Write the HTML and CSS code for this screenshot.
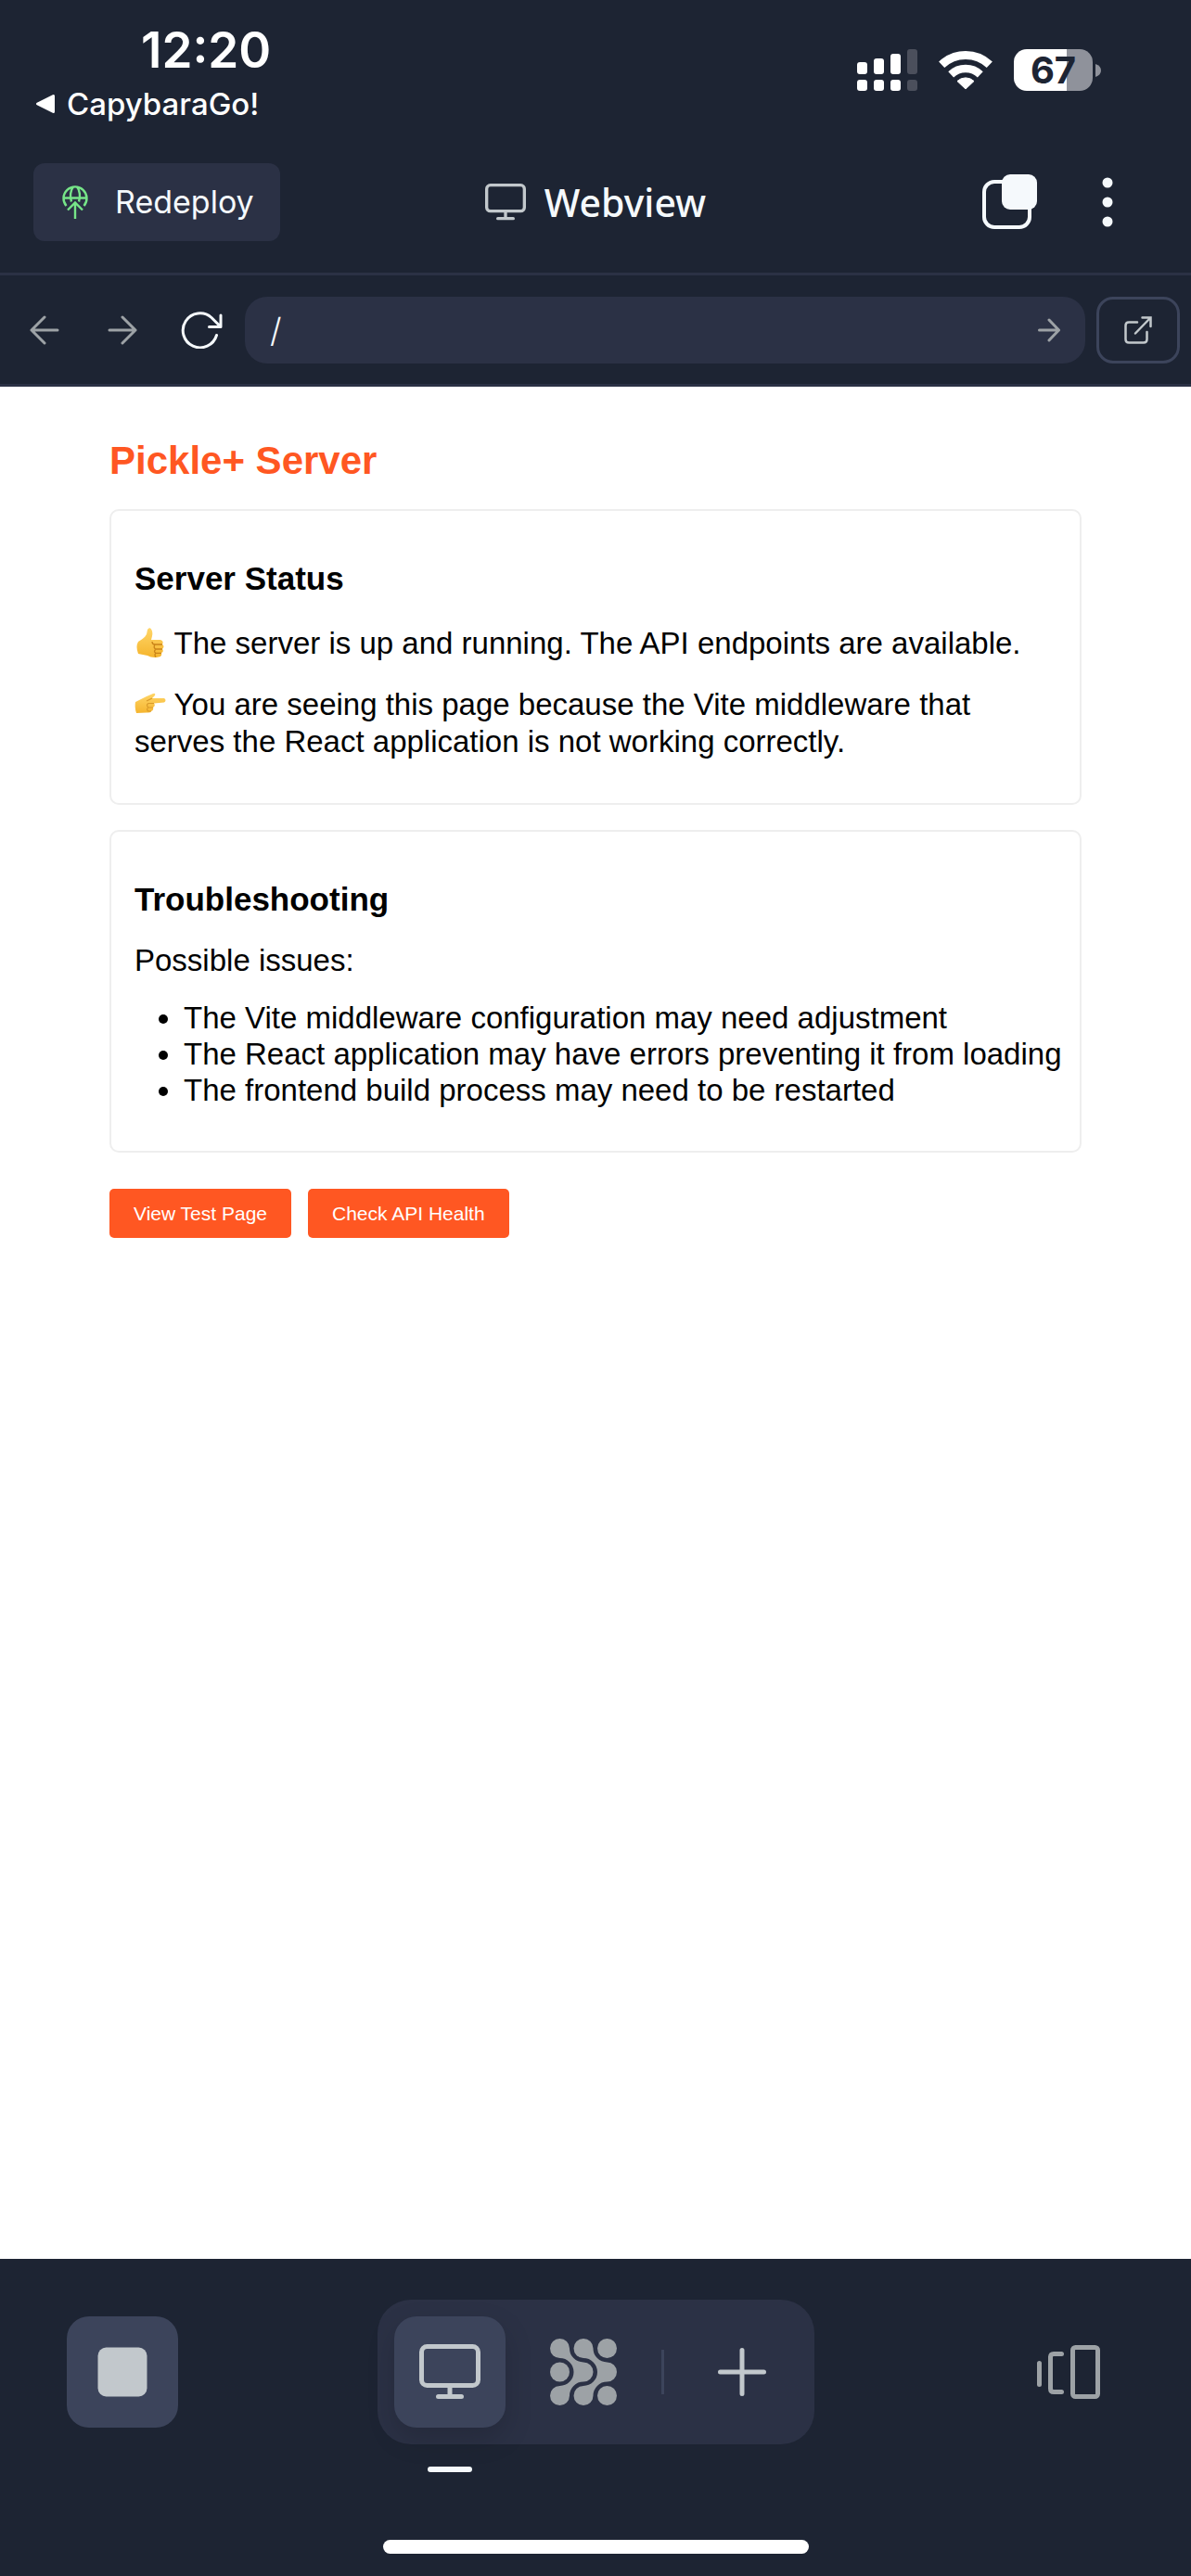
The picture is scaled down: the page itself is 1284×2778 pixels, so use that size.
FILE: index.html
```html
<!DOCTYPE html>
<html lang="en">
<head>
<meta charset="utf-8">
<meta name="viewport" content="width=device-width, initial-scale=1">
<title>Webview</title>
<link rel="stylesheet" href="styles.css">
</head>
<body>
<div class="statusbar">
  <div class="status-left">
    <time class="clock">12:20</time>
    <a class="back-app" href="#">
      <svg width="22" height="22" viewBox="0 0 22 22" aria-hidden="true"><path d="M2.500 11 19.500 2.500V19.500Z" fill="#fff" stroke="#fff" stroke-width="3" stroke-linejoin="round"/></svg>
      CapybaraGo!
    </a>
  </div>
  <div class="status-right">
    <svg width="65" height="45" viewBox="0 0 65 45" fill="#fff" aria-hidden="true">
      <rect x="0" y="14" width="11" height="13" rx="3"/><rect x="18" y="10" width="11" height="17" rx="3"/><rect x="36" y="5" width="11" height="22" rx="3"/>
      <rect x="0" y="33" width="11" height="12" rx="3"/><rect x="18" y="33" width="11" height="12" rx="3"/><rect x="36" y="33" width="11" height="12" rx="3"/>
      <g fill="#4b4f5c"><rect x="54" y="0" width="11" height="27" rx="3"/><rect x="54" y="33" width="11" height="12" rx="3"/></g>
    </svg>
    <svg class="wifi" width="58" height="45" viewBox="0 0 58 45" fill="none" stroke="#fff" aria-hidden="true">
      <path d="M3.200 16.800A37.500 37.500 0 0 1 54.800 16.800" stroke-width="9"/>
      <path d="M13.200 27.300A23 23 0 0 1 44.800 27.300" stroke-width="8.500"/>
      <path d="M29 43 20 34.500A13 13 0 0 1 38 34.500Z" fill="#fff" stroke-width="1" stroke-linejoin="round"/>
    </svg>
    <div class="battery">
      <span class="battery-level">67</span>
      <svg width="6" height="14" viewBox="0 0 6 14" aria-hidden="true"><path d="M0 0Q6 2 6 7T0 14Z" fill="#8f929b"/></svg>
    </div>
  </div>
</div>

<header class="header">
  <button class="redeploy" type="button">
    <svg width="30" height="38" viewBox="0 0 30 38" fill="none" stroke="#76e588" stroke-width="2.400" aria-hidden="true">
      <path d="M5.500 23A12.500 12.500 0 1 1 24.500 23M2.500 14.500H27.500M11 18.500C9 13 10 6 13 2.500M19 18.500C21 13 20 6 17 2.500"/>
      <path d="M15 37V20M7 27.500 15 19.500 23 27.500"/>
    </svg>
    Redeploy
  </button>
  <h1 class="title">
    <svg width="44" height="40" viewBox="0 0 66 60" fill="none" stroke="#c2c8cc" stroke-width="5" stroke-linecap="round" aria-hidden="true"><rect x="2.500" y="2.500" width="61" height="42" rx="6"/><path d="M33 45V56M20.500 56.500H45.500"/></svg>
    Webview
  </h1>
  <div class="header-actions">
    <button class="icon-btn" type="button" aria-label="Tabs">
      <svg width="60" height="60" viewBox="0 0 60 60" aria-hidden="true"><rect x="2" y="8" width="49" height="49" rx="11" fill="none" stroke="#f5f9fc" stroke-width="4"/><rect x="21" y="0" width="38" height="38" rx="9" fill="#f5f9fc"/></svg>
    </button>
    <button class="icon-btn" type="button" aria-label="More">
      <svg width="12" height="54" viewBox="0 0 12 54" fill="#f5f9fc" aria-hidden="true"><circle cx="6" cy="6" r="5.500"/><circle cx="6" cy="27" r="5.500"/><circle cx="6" cy="48" r="5.500"/></svg>
    </button>
  </div>
</header>

<nav class="toolbar">
  <button class="nav-btn" type="button" aria-label="Back">
    <svg width="32" height="32" viewBox="0 0 32 32" aria-hidden="true"><path d="M30 16H2M16 2 2 16 16 30"/></svg>
  </button>
  <button class="nav-btn" type="button" aria-label="Forward">
    <svg width="32" height="32" viewBox="0 0 32 32" aria-hidden="true"><path d="M2 16H30M16 2 30 16 16 30"/></svg>
  </button>
  <button class="nav-btn reload" type="button" aria-label="Reload">
    <svg width="48" height="40" viewBox="-4 0 48 40" aria-hidden="true"><path d="M37.500 25.500A18.500 18.500 0 1 1 32 6.500L41.500 16M42 4V16.500H29.500"/></svg>
  </button>
  <form class="address">
    <input class="address-input" type="text" value="/" aria-label="Address">
    <button class="icon-btn go" type="button" aria-label="Go">
      <svg width="24" height="26" viewBox="0 0 24 26" aria-hidden="true"><path d="M1.500 13H22.500M12 2 22.500 13 12 24"/></svg>
    </button>
  </form>
  <button class="open-btn" type="button" aria-label="Open in new window">
    <svg width="30" height="30" viewBox="0 0 30 30" fill="none" stroke="#c2c8cc" stroke-width="2.500" stroke-linecap="round" aria-hidden="true"><path d="M14 6.500H5Q1.500 6.500 1.500 10V25Q1.500 28.500 5 28.500H21Q24.500 28.500 24.500 25V17M19.500 1.500H28.500V11M28 2 12 18.500"/></svg>
  </button>
</nav>

<main class="page">
  <h2 class="page-title">Pickle+ Server</h2>
  <section class="card status">
    <h3>Server Status</h3>
    <p><svg class="emoji" width="34" height="34" viewBox="0 0 34 34" role="img" aria-label="Thumbs up"><defs><linearGradient id="skin" x1="0" y1="0" x2="0" y2="1"><stop offset="0" stop-color="#ffd567"/><stop offset="1" stop-color="#f5b52e"/></linearGradient></defs><path d="M4 15C7 13 11 11 13 7L14 2Q16-1 18 1.500Q20 4 19 9L18 13H28Q32 14 30 18Q33 20 30 23Q32 26 29 27Q30 31 26 31.500Q19 33 14 30L4 28Q1 20 4 15Z" fill="url(#skin)"/><path d="M30 18H22Q19 18 19 15M30 23H23Q20 22 22 18M29 27.300H23Q20 26 23 23M23 27.500Q21 29 23 31.500" fill="none" stroke="#c98318" stroke-width="1.300"/></svg> The server is up and running. The API endpoints are available.</p>
    <p><svg class="emoji" width="34" height="34" viewBox="0 0 34 34" role="img" aria-label="Pointing right"><path d="M1 14 13 8 20 5Q23 4 22 7L19 10H32Q35 12 32 14.500L21 15.500Q23 18 20 20Q21 23 18 24Q17 26 13 25.500L2 26Q0 20 1 14Z" fill="url(#skin)"/><path d="M21 15.500H15Q12 17 15 20H20M15 20Q12 22 15 24H18M19 10 13 13" fill="none" stroke="#d99a2a" stroke-width="1.200"/></svg> You are seeing this page because the Vite middleware that serves the React application is not working correctly.</p>
  </section>
  <section class="card">
    <h3>Troubleshooting</h3>
    <p>Possible issues:</p>
    <ul>
      <li>The Vite middleware configuration may need adjustment</li>
      <li>The React application may have errors preventing it from loading</li>
      <li>The frontend build process may need to be restarted</li>
    </ul>
  </section>
  <div class="actions">
    <button class="action" type="button">View Test Page</button>
    <button class="action" type="button">Check API Health</button>
  </div>
</main>

<footer class="dock">
  <div class="dock-row">
    <button class="dock-btn filled" type="button" aria-label="Stop">
      <svg width="54" height="54" viewBox="0 0 54 54" aria-hidden="true"><rect x="0.500" y="0.500" width="53" height="53" rx="9" fill="#c2c8cc"/></svg>
    </button>
    <div class="tabs">
      <button class="dock-btn filled active" type="button" aria-label="Webview">
        <svg width="66" height="60" viewBox="0 0 66 60" fill="none" stroke="#c2c8cc" stroke-width="5" stroke-linecap="round" aria-hidden="true"><rect x="2.500" y="2.500" width="61" height="42" rx="6"/><path d="M33 45V56M20.500 56.500H45.500"/></svg>
      </button>
      <button class="dock-btn" type="button" aria-label="Agent">
        <svg width="72" height="72" viewBox="0 0 72 72" fill="#9da2a6" aria-hidden="true">
          <path id="link" d="M21 10.500A15 15 0 0 0 36 25.500A10.500 10.500 0 0 1 36 46.500A15 15 0 0 0 21 61.500A10.500 10.500 0 1 1 10.500 51A15 15 0 0 0 10.500 21A10.500 10.500 0 1 1 21 10.500Z"/>
          <use href="#link" x="25.500"/>
          <circle cx="10.500" cy="36" r="10.500"/><circle cx="61.500" cy="10.500" r="10.500"/><circle cx="61.500" cy="61.500" r="10.500"/>
        </svg>
      </button>
      <span class="divider"></span>
      <button class="dock-btn" type="button" aria-label="Add tab">
        <svg width="54" height="54" viewBox="0 0 54 54" stroke="#c2c8cc" stroke-width="5" stroke-linecap="round" aria-hidden="true"><path d="M27 3.500V50.500M3.500 27H50.500"/></svg>
      </button>
    </div>
    <button class="dock-btn" type="button" aria-label="Switch tabs">
      <svg width="70" height="60" viewBox="0 0 70 60" fill="none" stroke="#9da2a6" stroke-width="5" stroke-linecap="round" stroke-linejoin="round" aria-hidden="true"><path d="M3.500 20.500V43.500M27.500 10.500H19Q15.500 10.500 15.500 14V48Q15.500 51.500 19 51.500H27.500"/><rect x="39.500" y="3.500" width="27" height="53" rx="3"/></svg>
    </button>
  </div>
  <div class="home-bar"></div>
</footer>
</body>
</html>
```
FILE: styles.css
```css
:root {
  --bg: #1d2433;
  --raised: #2b3145;
  --high: #3c445b;
  --text: #f5f9fc;
  --muted: #9da2a6;
  --accent: #ff5722;
}

* { box-sizing: border-box; }

body {
  margin: 0;
  min-height: 100vh;
  display: flex;
  flex-direction: column;
  background: var(--bg);
  color: var(--text);
  font-family: Inter, "Noto Sans", sans-serif;
}

svg { display: block; flex: none; }

button {
  margin: 0;
  padding: 0;
  border: 0;
  background: none;
  color: inherit;
  font: inherit;
}

.statusbar {
  display: flex;
  justify-content: space-between;
  padding: 24px 97px 0 38px;
  height: 142px;
}

.status-left { display: flex; flex-direction: column; }

.clock {
  padding-left: 114px;
  color: #fff;
  font-size: 53px;
  line-height: 60px;
  font-weight: 600;
}

.back-app {
  display: flex;
  align-items: center;
  gap: 12px;
  color: #fff;
  font-size: 33px;
  line-height: 56px;
  font-weight: 500;
  text-decoration: none;
}

.status-right {
  display: flex;
  align-items: flex-start;
  gap: 23px;
  padding-top: 29px;
}

.battery { display: flex; align-items: center; gap: 3px; }

.battery-level {
  width: 85px;
  border-radius: 14px;
  background: linear-gradient(to right, #fff 67%, #8f929b 67%);
  color: var(--bg);
  font-size: 40px;
  line-height: 45px;
  font-weight: 700;
  text-align: center;
}

.header {
  display: grid;
  grid-template-columns: 1fr auto 1fr;
  align-items: center;
  padding: 34px 84px 34px 36px;
  border-bottom: 3px solid var(--raised);
}

.redeploy {
  justify-self: start;
  display: flex;
  align-items: center;
  gap: 28px;
  padding: 0 28px 0 30px;
  border-radius: 12px;
  background: var(--raised);
  font-size: 34px;
  line-height: 84px;
}

.title {
  display: flex;
  align-items: center;
  gap: 20px;
  margin: 0 -24px 0 24px;
  font-family: "Noto Sans", sans-serif;
  font-size: 41px;
  line-height: 60px;
  font-weight: 500;
}

.header-actions {
  justify-self: end;
  display: flex;
  align-items: center;
  gap: 69px;
}

.toolbar {
  display: flex;
  align-items: center;
  gap: 12px;
  padding: 23px 12px 22px;
  border-bottom: 3px solid var(--raised);
}

.nav-btn {
  display: grid;
  place-items: center;
  width: 72px;
  height: 72px;
}

.nav-btn svg, .go svg {
  fill: none;
  stroke: var(--muted);
  stroke-width: 3;
  stroke-linecap: round;
  stroke-linejoin: round;
}

.nav-btn.reload svg { stroke: var(--text); }

.address {
  flex: 1;
  display: flex;
  align-items: center;
  height: 72px;
  padding: 0 27px;
  border-radius: 24px;
  background: var(--raised);
}

.address-input {
  flex: 1;
  min-width: 0;
  padding: 0;
  border: 0;
  background: none;
  color: var(--text);
  font: 300 36px Inter, sans-serif;
}

.open-btn {
  display: grid;
  place-items: center;
  width: 90px;
  height: 72px;
  border: 3px solid var(--high);
  border-radius: 18px;
}

.page {
  flex: 1;
  padding: 56px 118px;
  background: #fff;
  color: #000;
  font-family: "Liberation Sans", Arial, sans-serif;
  font-size: 33px;
  line-height: 40px;
}

.page-title {
  margin: 0 0 28px;
  color: var(--accent);
  font-size: 42px;
  line-height: 48px;
}

.card {
  margin-bottom: 27px;
  padding: 52px 16px 46px 25px;
  border: 2px solid #eee;
  border-radius: 10px;
}

.card h3 {
  margin: 0 0 25px;
  font-size: 35px;
  line-height: 42px;
}

.card.status h3 { margin-bottom: 29px; }

.card p { margin: 0 0 26px; }
.card p:last-child { margin-bottom: 0; }

.card ul {
  margin: -4px 0 0;
  padding-left: 53px;
  line-height: 39px;
}

.emoji { display: inline-block; vertical-align: -6px; }

.actions {
  display: flex;
  gap: 18px;
  padding-top: 12px;
}

.action {
  padding: 0 26px;
  border-radius: 5px;
  background: var(--accent);
  color: #fff;
  font-size: 21px;
  line-height: 53px;
}

.dock { padding: 44px 72px 24px; }

.dock-row {
  display: flex;
  align-items: center;
  justify-content: space-between;
}

.dock-btn {
  position: relative;
  display: grid;
  place-items: center;
  width: 120px;
  height: 120px;
  border-radius: 24px;
}

.filled { background: var(--high); }

.tabs {
  display: flex;
  align-items: center;
  gap: 24px;
  padding: 18px;
  border-radius: 36px;
  background: var(--raised);
}

.active { box-shadow: 0 12px 30px rgba(0, 0, 0, 0.15); }

.active::after {
  content: "";
  position: absolute;
  top: 162px;
  left: 36px;
  width: 48px;
  height: 6px;
  border-radius: 3px;
  background: var(--text);
}

.divider {
  width: 3px;
  height: 48px;
  background: var(--high);
}

.home-bar {
  width: 459px;
  height: 15px;
  margin: 103px auto 0;
  border-radius: 8px;
  background: #fff;
}
```
